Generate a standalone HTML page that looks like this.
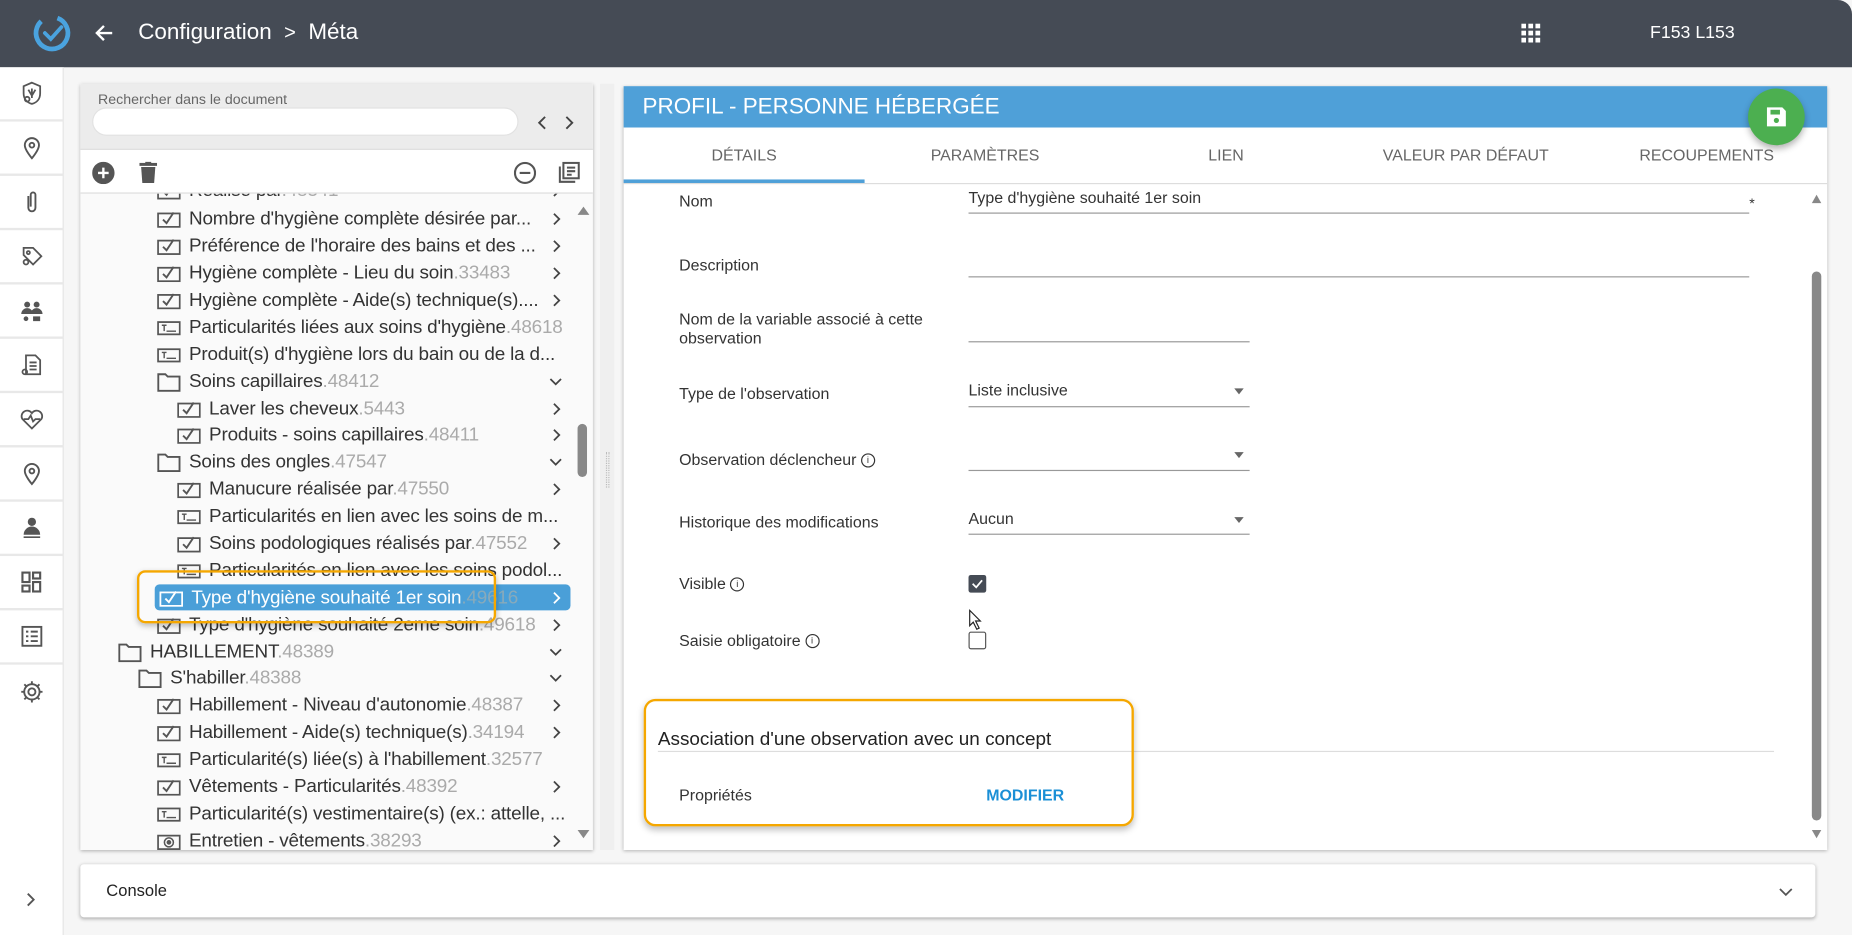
<!DOCTYPE html>
<html><head><meta charset="utf-8">
<style>
*{box-sizing:border-box;margin:0;padding:0}
html,body{width:1852px;height:935px;overflow:hidden;background:#f6f6f6;font-family:"Liberation Sans",sans-serif}
#w{position:absolute;left:0;top:0;width:1568px;height:792px;transform:scale(1.18112,1.1806);transform-origin:0 0;background:#f6f6f6}
.a{position:absolute}
#hdr{left:0;top:0;width:1568px;height:57px;background:#454b55;border-top-right-radius:12px}
#side{left:0;top:57px;width:54px;height:735px;background:#fff;border-right:1px solid #e4e4e4}
.si{position:absolute;left:0;width:54px;height:46px;border-bottom:2px solid #e8e8e8;display:flex;align-items:center;justify-content:center}
#tree{left:68px;top:71px;width:434px;height:649px;background:#fafafa;box-shadow:0 1px 3px rgba(0,0,0,.3);overflow:hidden}
.row{position:absolute;height:23px;line-height:23px;font-size:16px;color:#333;white-space:nowrap;letter-spacing:-.15px}
.row .n{color:#aaa}
.row svg{position:absolute;left:0;top:4px}
.row .t{position:absolute;left:27px}
.row svg.ch{top:6px}
#rp{left:528px;top:73px;width:1019px;height:647px;background:#fff;box-shadow:0 1px 3px rgba(0,0,0,.3)}
.lbl{position:absolute;left:47px;font-size:13.5px;color:#333}
.ul{position:absolute;left:292px;height:1px;background:#999}
.val{position:absolute;left:292px;font-size:13.5px;color:#333}
.tab{position:absolute;top:51px;font-size:13.5px;color:#666;text-align:center;width:204px}
.dd{position:absolute;width:0;height:0;border-left:4px solid transparent;border-right:4px solid transparent;border-top:5px solid #666}
</style></head><body><div id="w">

<div id="hdr" class="a">
 <svg class="a" style="left:27px;top:11px" width="34" height="34" viewBox="0 0 34 34"><circle cx="17" cy="17" r="13.5" fill="none" stroke="#4aa3df" stroke-width="4" stroke-dasharray="70 15" transform="rotate(-70 17 17)"/><path d="M11 17l5 5 9-10" fill="none" stroke="#4aa3df" stroke-width="3.2" stroke-linecap="round"/></svg>
 <svg class="a" style="left:79px;top:20px" width="18" height="16" viewBox="0 0 18 16"><path d="M16 8H3M9 2L3 8l6 6" fill="none" stroke="#fff" stroke-width="2"/></svg>
 <div class="a" style="left:117px;top:17px;font-size:19px;color:#fff">Configuration &nbsp;<span style="font-size:17px">&gt;</span>&nbsp; Méta</div>
 <svg class="a" style="left:1288px;top:20px" width="17" height="17" viewBox="0 0 17 17" fill="#fff"><rect x="0" y="0" width="4" height="4"/><rect x="6" y="0" width="4" height="4"/><rect x="12" y="0" width="4" height="4"/><rect x="0" y="6" width="4" height="4"/><rect x="6" y="6" width="4" height="4"/><rect x="12" y="6" width="4" height="4"/><rect x="0" y="12" width="4" height="4"/><rect x="6" y="12" width="4" height="4"/><rect x="12" y="12" width="4" height="4"/></svg>
 <div class="a" style="left:1397px;top:19px;font-size:15px;color:#fff">F153 L153</div>
</div>

<div id="side" class="a">
 <div class="si" style="top:0"><svg width="22" height="22" viewBox="0 0 22 22" fill="none" stroke="#555" stroke-width="1.5"><path d="M11 2l7 3v6c0 5-3 8-7 9-4-1-7-4-7-9V5z"/><path d="M8 8l3 5 3-5M11 7v8"/><circle cx="7" cy="16" r="2"/></svg></div>
 <div class="si" style="top:46px"><svg width="22" height="22" viewBox="0 0 22 22" fill="none" stroke="#555" stroke-width="1.6"><path d="M11 20s-6-7-6-11a6 6 0 0112 0c0 4-6 11-6 11z"/><circle cx="11" cy="9" r="2"/></svg></div>
 <div class="si" style="top:92px"><svg width="22" height="22" viewBox="0 0 22 22" fill="none" stroke="#555" stroke-width="1.6"><path d="M8 6v10a3 3 0 006 0V5a2 2 0 00-4 0v10"/></svg></div>
 <div class="si" style="top:138px"><svg width="22" height="22" viewBox="0 0 22 22" fill="none" stroke="#555" stroke-width="1.5"><path d="M4 4h8l7 7-7 7-8-8z"/><circle cx="8" cy="8" r="1.3"/><circle cx="6" cy="16" r="2"/></svg></div>
 <div class="si" style="top:184px"><svg width="22" height="22" viewBox="0 0 22 22" fill="#555"><circle cx="7" cy="6" r="2.5"/><circle cx="15" cy="6" r="2.5"/><path d="M2 14a5 5 0 0110 0zM10 14a5 5 0 0110 0z"/><circle cx="6" cy="18" r="2"/><rect x="12" y="16" width="6" height="4"/></svg></div>
 <div class="si" style="top:230px"><svg width="22" height="22" viewBox="0 0 22 22" fill="none" stroke="#555" stroke-width="1.5"><path d="M6 3h8l4 4v12H6z"/><path d="M9 9h6M9 12h6M9 15h6"/><circle cx="5" cy="17" r="2"/></svg></div>
 <div class="si" style="top:276px"><svg width="22" height="22" viewBox="0 0 22 22" fill="none" stroke="#555" stroke-width="1.5"><path d="M11 19L3 11a4.5 4.5 0 018-5 4.5 4.5 0 018 5z"/><path d="M4 11h4l2-3 2 5 2-2h4"/></svg></div>
 <div class="si" style="top:322px"><svg width="22" height="22" viewBox="0 0 22 22" fill="none" stroke="#555" stroke-width="1.6"><path d="M11 20s-6-7-6-11a6 6 0 0112 0c0 4-6 11-6 11z"/><circle cx="11" cy="9" r="2"/></svg></div>
 <div class="si" style="top:368px"><svg width="22" height="22" viewBox="0 0 22 22" fill="#555"><circle cx="11" cy="6" r="3.5"/><path d="M4 17a7 7 0 0114 0z"/><path d="M4 19h14" stroke="#555" stroke-width="1.3"/></svg></div>
 <div class="si" style="top:414px"><svg width="20" height="20" viewBox="0 0 20 20" fill="none" stroke="#555" stroke-width="1.8"><rect x="2" y="2" width="6" height="8"/><rect x="11" y="2" width="6" height="5"/><rect x="2" y="13" width="6" height="5"/><rect x="11" y="10" width="6" height="8"/></svg></div>
 <div class="si" style="top:460px"><svg width="20" height="20" viewBox="0 0 20 20" fill="none" stroke="#555" stroke-width="1.6"><rect x="2" y="2" width="16" height="16"/><path d="M5 6h2M9 6h6M5 10h2M9 10h6M5 14h2M9 14h6"/></svg></div>
 <div class="si" style="top:506px;border:none"><svg width="22" height="22" viewBox="0 0 22 22" fill="none" stroke="#555" stroke-width="1.6"><circle cx="11" cy="11" r="3"/><path d="M11 2v3M11 17v3M2 11h3M17 11h3M4.6 4.6l2.1 2.1M15.3 15.3l2.1 2.1M4.6 17.4l2.1-2.1M15.3 6.7l2.1-2.1"/><circle cx="11" cy="11" r="6.5"/></svg></div>
 <svg class="a" style="left:22px;top:699px" width="8" height="12" viewBox="0 0 8 12"><path d="M1.5 1l5 5-5 5" fill="none" stroke="#555" stroke-width="1.6"/></svg>
</div>

<div id="tree" class="a">
 <div class="a" style="left:421px;top:104px;width:0;height:0;border-left:5px solid transparent;border-right:5px solid transparent;border-bottom:7px solid #888"></div>
 <div class="a" style="left:421px;top:288px;width:8px;height:45px;border-radius:4px;background:#888"></div>
 <div class="a" style="left:421px;top:632px;width:0;height:0;border-left:5px solid transparent;border-right:5px solid transparent;border-top:7px solid #888"></div>
 <div class="a" style="left:63px;top:424px;width:352px;height:22px;background:#4a9fd8;border-radius:4px"></div>
 <div id="rows"></div>
 <div class="a" style="left:48px;top:412px;width:304px;height:45px;border:2.5px solid #f5a700;border-radius:7px;box-shadow:0 2px 5px rgba(0,0,0,.25)"></div>
 <div class="a" style="left:0;top:0;width:434px;height:56px;background:#ececec;border-bottom:1px solid #ddd"></div>
 <div class="a" style="left:15px;top:6px;font-size:12px;color:#666">Rechercher dans le document</div>
 <div class="a" style="left:10px;top:20px;width:361px;height:24px;background:#fff;border-radius:12px;border:1px solid #e2e2e2"></div>
 <svg class="a" style="left:387px;top:27px" width="8" height="12" viewBox="0 0 8 12"><path d="M6.5 1l-5 5 5 5" fill="none" stroke="#444" stroke-width="1.6"/></svg>
 <svg class="a" style="left:410px;top:27px" width="8" height="12" viewBox="0 0 8 12"><path d="M1.5 1l5 5-5 5" fill="none" stroke="#444" stroke-width="1.6"/></svg>
 <div class="a" style="left:0;top:56px;width:434px;height:37px;background:#fff;border-bottom:1px solid #ddd"></div>
 <svg class="a" style="left:10px;top:66px" width="19" height="19" viewBox="0 0 19 19"><circle cx="9.5" cy="9.5" r="9.5" fill="#555"/><path d="M9.5 5v9M5 9.5h9" stroke="#fff" stroke-width="2"/></svg>
 <svg class="a" style="left:50px;top:66px" width="15" height="18" viewBox="0 0 15 18" fill="#555"><rect x="0" y="1" width="15" height="2.5"/><rect x="5" y="0" width="5" height="2"/><path d="M1.5 4.5h12l-1 13.5h-10z"/></svg>
 <svg class="a" style="left:367px;top:66px" width="19" height="19" viewBox="0 0 19 19" fill="none" stroke="#555" stroke-width="1.8"><circle cx="9.5" cy="9.5" r="8.5"/><path d="M5 9.5h9"/></svg>
 <svg class="a" style="left:404px;top:65px" width="20" height="20" viewBox="0 0 20 20" fill="none" stroke="#555" stroke-width="1.7"><path d="M2 5v13h13"/><rect x="5" y="2" width="13" height="13"/><path d="M8 6h7M8 9h7M8 12h4"/></svg>
</div>

<div class="a" style="left:508px;top:71px;width:12px;height:649px;background:#efefef"></div>
<div class="a" style="left:513px;top:383px;width:3px;height:30px;border-left:1px dotted #bbb;border-right:1px dotted #bbb"></div>

<div id="rp" class="a">
 <div class="a" style="left:0;top:0;width:1019px;height:35px;background:#4fa0d8"></div>
 <div class="a" style="left:16px;top:7px;font-size:19px;color:#fff">PROFIL - PERSONNE HÉBERGÉE</div>
 <div class="tab" style="left:0">DÉTAILS</div>
 <div class="tab" style="left:204px">PARAMÈTRES</div>
 <div class="tab" style="left:408px">LIEN</div>
 <div class="tab" style="left:611px">VALEUR PAR DÉFAUT</div>
 <div class="tab" style="left:815px">RECOUPEMENTS</div>
 <div class="a" style="left:0;top:79px;width:204px;height:3px;background:#4fa0d8"></div>
 <div class="a" style="left:0;top:82px;width:1019px;height:1px;background:#ddd"></div>
 <div class="lbl" style="top:90px">Nom</div>
 <div class="val" style="top:87px">Type d'hygiène souhaité 1er soin</div>
 <div class="ul" style="top:107px;width:661px"></div>
 <div class="a" style="left:953px;top:92px;font-size:12px;color:#333">*</div>
 <div class="lbl" style="top:144px">Description</div>
 <div class="ul" style="top:161px;width:661px"></div>
 <div class="lbl" style="top:190px;line-height:16px">Nom de la variable associé à cette<br>observation</div>
 <div class="ul" style="top:216px;width:238px"></div>
 <div class="lbl" style="top:253px">Type de l'observation</div>
 <div class="val" style="top:250px">Liste inclusive</div>
 <div class="dd" style="left:517px;top:256px"></div>
 <div class="ul" style="top:271px;width:238px"></div>
 <div class="lbl" style="top:309px">Observation déclencheur <span style="display:inline-block;width:12px;height:12px;border:1.3px solid #333;border-radius:50%;font-size:8px;line-height:10px;text-align:center;vertical-align:2px">i</span></div>
 <div class="dd" style="left:517px;top:310px"></div>
 <div class="ul" style="top:325px;width:238px"></div>
 <div class="lbl" style="top:362px">Historique des modifications</div>
 <div class="val" style="top:359px">Aucun</div>
 <div class="dd" style="left:517px;top:365px"></div>
 <div class="ul" style="top:379px;width:238px"></div>
 <div class="lbl" style="top:414px">Visible <span style="display:inline-block;width:12px;height:12px;border:1.3px solid #333;border-radius:50%;font-size:8px;line-height:10px;text-align:center;vertical-align:2px">i</span></div>
 <div class="a" style="left:292px;top:414px;width:15px;height:15px;background:#454b55;border-radius:2px"><svg width="15" height="15" viewBox="0 0 15 15"><path d="M3.5 7.5l3 3 5-6" fill="none" stroke="#fff" stroke-width="1.5"/></svg></div>
 <svg class="a" style="left:292px;top:443px" width="12" height="18" viewBox="0 0 12 18"><path d="M1 1v13l3-3 3 6 2-1-3-6h4z" fill="#fff" stroke="#222" stroke-width="1"/></svg>
 <div class="lbl" style="top:462px">Saisie obligatoire <span style="display:inline-block;width:12px;height:12px;border:1.3px solid #333;border-radius:50%;font-size:8px;line-height:10px;text-align:center;vertical-align:2px">i</span></div>
 <div class="a" style="left:292px;top:462px;width:15px;height:15px;border:1.7px solid #555;border-radius:2px"></div>
 <div class="a" style="left:29px;top:545px;font-size:16px;color:#222">Association d'une observation avec un concept</div>
 <div class="a" style="left:29px;top:563px;width:945px;height:1px;background:#ddd"></div>
 <div class="lbl" style="top:593px">Propriétés</div>
 <div class="a" style="left:307px;top:593px;font-size:13.5px;color:#1a8fd6;font-weight:bold">MODIFIER</div>
 <div class="a" style="left:17px;top:519px;width:415px;height:108px;border:2.5px solid #f5a700;border-radius:10px;box-shadow:0 3px 6px rgba(0,0,0,.25)"></div>
 <div class="a" style="left:1006px;top:92px;width:0;height:0;border-left:4.5px solid transparent;border-right:4.5px solid transparent;border-bottom:7px solid #888"></div>
 <div class="a" style="left:1006px;top:157px;width:8px;height:465px;border-radius:4px;background:#888"></div>
 <div class="a" style="left:1006px;top:630px;width:0;height:0;border-left:4.5px solid transparent;border-right:4.5px solid transparent;border-top:7px solid #888"></div>
</div>

<div class="a" style="left:1480px;top:75px;width:48px;height:48px;border-radius:50%;background:#4caf50;box-shadow:0 3px 6px rgba(0,0,0,.3)"><svg style="position:absolute;left:15px;top:15px" width="18" height="18" viewBox="0 0 18 18"><path d="M1 1h13l3 3v13H1z" fill="#fff"/><rect x="4" y="3" width="8" height="4" fill="#4caf50"/><circle cx="9" cy="12" r="2.2" fill="#4caf50"/></svg></div>

<div class="a" style="left:68px;top:732px;width:1469px;height:45px;background:#fff;border-radius:3px;box-shadow:0 1px 3px rgba(0,0,0,.3)">
 <div class="a" style="left:22px;top:14px;font-size:14px;color:#222">Console</div>
 <svg class="a" style="left:1438px;top:20px" width="12" height="8" viewBox="0 0 12 8"><path d="M1 1l5 5 5-5" fill="none" stroke="#555" stroke-width="1.5"/></svg>
</div>

</div>
<script>
var C='<svg width="20" height="15" viewBox="0 0 20 15"><rect x="0.8" y="2.8" width="18.4" height="11.4" fill="none" stroke="#555" stroke-width="1.5"/><path d="M5 8l3 3 6-9" fill="none" stroke="#555" stroke-width="1.6"/></svg>';
var CW='<svg width="20" height="15" viewBox="0 0 20 15"><rect x="0.8" y="2.8" width="18.4" height="11.4" fill="none" stroke="#fff" stroke-width="1.5"/><path d="M5 8l3 3 6-9" fill="none" stroke="#fff" stroke-width="1.6"/></svg>';
var T='<svg width="20" height="15" viewBox="0 0 20 15"><rect x="0.8" y="2.8" width="18.4" height="10.4" fill="none" stroke="#555" stroke-width="1.5"/><path d="M4 5.5h4M6 5.5v5M8 10.5h8" stroke="#555" stroke-width="1.2"/></svg>';
var F='<svg width="20" height="17" viewBox="0 0 20 17" style="top:3px"><path d="M1 2h6l2 2h10v12H1z" fill="none" stroke="#555" stroke-width="1.6"/></svg>';
var R='<svg width="20" height="15" viewBox="0 0 20 15"><rect x="0.8" y="2.8" width="18.4" height="11.4" fill="none" stroke="#555" stroke-width="1.5"/><circle cx="10" cy="8.5" r="3.8" fill="none" stroke="#555" stroke-width="1.3"/><circle cx="10" cy="8.5" r="2" fill="#555"/></svg>';
var rows=[
[79,C,65,"Réalisé par","48341",">"],
[103,C,65,"Nombre d'hygiène complète désirée par...","",">"],
[126,C,65,"Préférence de l'horaire des bains et des ...","",">"],
[149,C,65,"Hygiène complète - Lieu du soin","33483",">"],
[172,C,65,"Hygiène complète - Aide(s) technique(s)....","",">"],
[195,T,65,"Particularités liées aux soins d'hygiène","48618",""],
[218,T,65,"Produit(s) d'hygiène lors du bain ou de la d...","",""],
[241,F,65,"Soins capillaires","48412","v"],
[264,C,82,"Laver les cheveux","5443",">"],
[286,C,82,"Produits - soins capillaires","48411",">"],
[309,F,65,"Soins des ongles","47547","v"],
[332,C,82,"Manucure réalisée par","47550",">"],
[355,T,82,"Particularités en lien avec les soins de m...","",""],
[378,C,82,"Soins podologiques réalisés par","47552",">"],
[401,T,82,"Particularités en lien avec les soins podol...","",""],
[424,CW,67,"Type d'hygiène souhaité 1er soin","49616",">","s"],
[447,C,65,"Type d'hygiène souhaité 2eme soin","49618",">"],
[470,F,32,"HABILLEMENT","48389","v"],
[492,F,49,"S'habiller","48388","v"],
[515,C,65,"Habillement - Niveau d'autonomie","48387",">"],
[538,C,65,"Habillement - Aide(s) technique(s)","34194",">"],
[561,T,65,"Particularité(s) liée(s) à l'habillement","32577",""],
[584,C,65,"Vêtements - Particularités","48392",">"],
[607,T,65,"Particularité(s) vestimentaire(s) (ex.: attelle, ...","",""],
[630,R,65,"Entretien - vêtements","38293",">"]];
var h='';
rows.forEach(function(r){
 var s=r[6]=='s';
 var col=s?'#fff':'#444';
 var ch=r[5]=='>'?'<svg class="ch" style="left:'+(400-r[2])+'px" width="7" height="11" viewBox="0 0 7 11"><path d="M1 1l4.5 4.5L1 10" fill="none" stroke="'+col+'" stroke-width="1.5"/></svg>':(r[5]=='v'?'<svg class="ch" style="left:'+(397-r[2])+'px;top:8px" width="11" height="7" viewBox="0 0 11 7"><path d="M1 1l4.5 4.5L10 1" fill="none" stroke="#444" stroke-width="1.5"/></svg>':'');
 h+='<div class="row" style="top:'+r[0]+'px;left:'+r[2]+'px;'+(s?'color:#fff':'')+'">'+r[1]+'<span class="t">'+r[3]+(r[4]?'<span class="n" style="'+(s?'color:#8ab':'')+'">.'+r[4]+'</span>':'')+'</span>'+ch+'</div>';
});
document.getElementById('rows').innerHTML=h;
</script>
</body></html>
